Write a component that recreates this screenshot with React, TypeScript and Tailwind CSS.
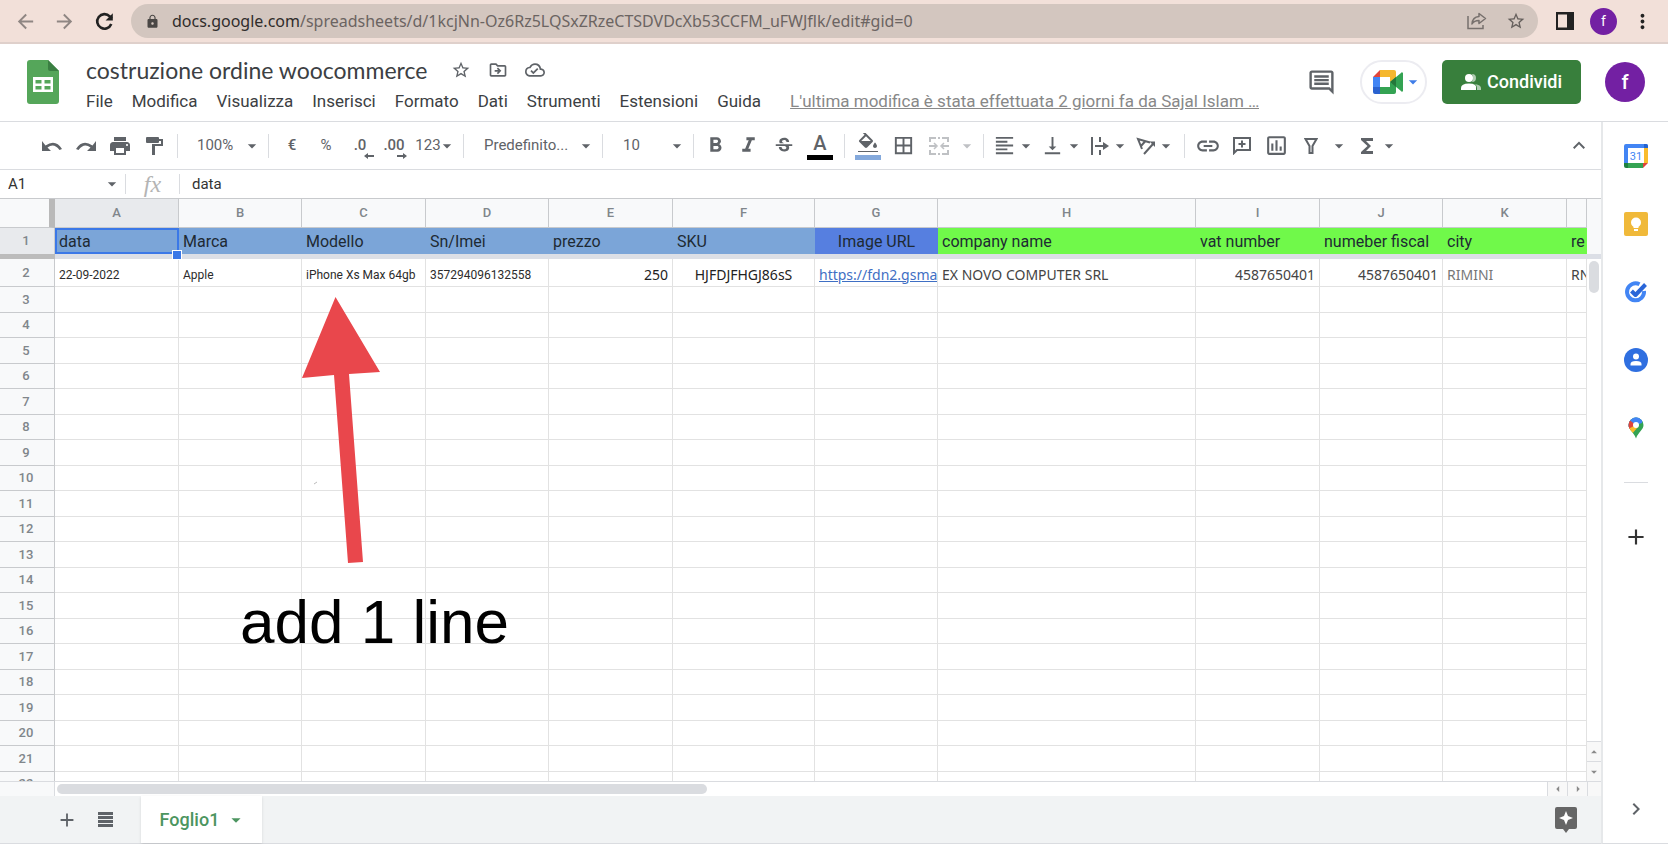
import { ReactNode } from "react";
import { clsx } from "clsx";
import {
    MdAdd,
    MdArrowBack,
    MdArrowDropDown,
    MdArrowDropUp,
    MdArrowForward,
    MdArrowLeft,
    MdArrowRight,
    MdBorderAll,
    MdChevronRight,
    MdFormatAlignLeft,
    MdFormatBold,
    MdFormatColorFill,
    MdFormatItalic,
    MdFunctions,
    MdInsertLink,
    MdKeyboardArrowUp,
    MdLock,
    MdMoreVert,
    MdOutlineCloudDone,
    MdOutlineDriveFileMove,
    MdOutlineInsertChart,
    MdOutlineInsertComment,
    MdPrint,
    MdStarBorder,
    MdStrikethroughS,
    MdVerticalAlignBottom,
} from "react-icons/md";

interface ToolProps {
    label: string;
    className?: string;
    children: ReactNode;
}

interface PickerProps {
    label: string;
    value: string;
    className: string;
}

interface Column {
    letter: string;
    width: string;
    title: string;
    value: ReactNode;
    head: string;
    cell: string;
}

const small = "font-[Roboto,sans-serif] text-xs leading-5 text-[#2b2b2b]";
const normal = "text-sm leading-5 text-[#444]";

const columns: Column[] = [
    { letter: "A", width: "w-[124px]", title: "data", value: "22-09-2022", head: "bg-[#7ba5d8]", cell: small },
    { letter: "B", width: "w-[123px]", title: "Marca", value: "Apple", head: "bg-[#7ba5d8]", cell: small },
    { letter: "C", width: "w-[124px]", title: "Modello", value: "iPhone Xs Max 64gb", head: "bg-[#7ba5d8]", cell: small },
    { letter: "D", width: "w-[123px]", title: "Sn/Imei", value: "357294096132558", head: "bg-[#7ba5d8]", cell: small },
    { letter: "E", width: "w-[124px]", title: "prezzo", value: "250", head: "bg-[#7ba5d8]", cell: "text-sm leading-5 text-[#222] text-right" },
    { letter: "F", width: "w-[142px]", title: "SKU", value: "HJFDJFHGJ86sS", head: "bg-[#7ba5d8]", cell: "text-sm leading-5 text-[#222] text-center" },
    {
        letter: "G",
        width: "w-[123px]",
        title: "Image URL",
        value: <a href="#image" className="text-[#3f6fc4] underline">https://fdn2.gsma</a>,
        head: "bg-[#567fe0] text-center",
        cell: "text-sm leading-5",
    },
    { letter: "H", width: "w-[258px]", title: "company name", value: "EX NOVO COMPUTER SRL", head: "bg-[#70f94a]", cell: normal },
    { letter: "I", width: "w-[124px]", title: "vat number", value: "4587650401", head: "bg-[#70f94a]", cell: "text-sm leading-5 text-[#444] text-right" },
    { letter: "J", width: "w-[123px]", title: "numeber fiscal", value: "4587650401", head: "bg-[#70f94a]", cell: "text-sm leading-5 text-[#444] text-right" },
    { letter: "K", width: "w-[124px]", title: "city", value: "RIMINI", head: "bg-[#70f94a]", cell: "text-sm leading-5 text-[#777]" },
    { letter: "", width: "", title: "re", value: "RN", head: "bg-[#70f94a]", cell: normal },
];

const emptyRows = Array.from({ length: 20 }, (_, i) => i + 3);

const menus = ["File", "Modifica", "Visualizza", "Inserisci", "Formato", "Dati", "Strumenti", "Estensioni", "Guida"];

const Tool = ({ label, className = "w-[34px]", children }: ToolProps) => (
    <button aria-label={label} className={clsx("flex items-center justify-center shrink-0 h-9", className)}>
        {children}
    </button>
);

const Divider = () => <span className="w-px mx-1.5 h-6 shrink-0 bg-[#dadce0]" />;

const Picker = ({ label, value, className }: PickerProps) => (
    <span className={clsx("grid items-center shrink-0", className)}>
        <select aria-label={label} className="w-full col-start-1 row-start-1 bg-transparent appearance-none outline-none">
            <option>{value}</option>
        </select>
        <MdArrowDropDown className="col-start-1 row-start-1 pointer-events-none justify-self-end" size={20} />
    </span>
);

const SheetsLogo = () => (
    <svg width="32" height="44" viewBox="0 0 32 44" className="shrink-0">
        <path d="M3 0H21L32 11V41a3 3 0 0 1-3 3H3a3 3 0 0 1-3-3V3a3 3 0 0 1 3-3Z" fill="#55a65a" />
        <path d="M21 0 32 11H23a2 2 0 0 1-2-2Z" fill="#3a7f42" />
        <path fillRule="evenodd" d="M6 17H26V32H6ZM8.500 20V23.500H14.500V20ZM17.500 20V23.500H23.500V20ZM8.500 26V29.500H14.500V26ZM17.500 26V29.500H23.500V26Z" fill="#fff" />
    </svg>
);

const MeetLogo = () => (
    <svg width="30" height="24" viewBox="0 0 30 24" className="shrink-0">
        <path d="M7 0V7H0Z" fill="#e0453a" />
        <path d="M0 7H7V17H0Z" fill="#4285f4" />
        <path d="M0 17H7V24H2a2 2 0 0 1-2-2Z" fill="#2a62cf" />
        <path d="M7 0H21a2 2 0 0 1 2 2V8L17 12V7H7Z" fill="#f5b72e" />
        <path d="M7 17H17V12L23 16V22a2 2 0 0 1-2 2H7Z" fill="#34a353" />
        <path d="M17 12 28 3a1 1 0 0 1 2 1V20a1 1 0 0 1-2 1Z" fill="#34a353" />
        <path d="M17 12 23 7V17Z" fill="#23783a" />
    </svg>
);

const CalendarLogo = () => (
    <svg width="24" height="24" viewBox="0 0 24 24">
        <path d="M2 0H22a2 2 0 0 1 2 2V4H4V19H0V2a2 2 0 0 1 2-2Z" fill="#4285f4" />
        <path d="M20 0H22a2 2 0 0 1 2 2V4H20Z" fill="#2463cf" />
        <path d="M20 4H24V19H20Z" fill="#f9bc2b" />
        <path d="M4 19H19V24H4Z" fill="#34a353" />
        <path d="M0 19H4V24H2a2 2 0 0 1-2-2Z" fill="#1f8040" />
        <path d="M19 19H24L19 24Z" fill="#e0453a" />
        <path d="M4 4H20V19H4Z" fill="#fff" />
        <text x="12" y="16" textAnchor="middle" fontSize="11" fontFamily="Roboto, sans-serif" fill="#4285f4">31</text>
    </svg>
);

const KeepLogo = () => (
    <svg width="24" height="24" viewBox="0 0 24 24">
        <rect width="24" height="24" rx="2" fill="#f0b93a" />
        <circle cx="12" cy="10.500" r="5" fill="#fff" />
        <path d="M9.500 14H14.500V16H9.500ZM10 17H14V19H10Z" fill="#fff" />
    </svg>
);

const TasksLogo = () => (
    <svg width="24" height="24" viewBox="0 0 24 24" fill="none">
        <path d="M15.500 4.300A8.500 8.500 0 1 0 20 11" stroke="#4285f4" strokeWidth="4" />
        <path d="M7.500 11 11.500 15 21.500 4.500" stroke="#2a66d8" strokeWidth="4" strokeLinejoin="round" />
    </svg>
);

const ContactsLogo = () => (
    <svg width="24" height="24" viewBox="0 0 24 24">
        <circle cx="12" cy="12" r="12" fill="#2f6fe0" />
        <circle cx="12" cy="8.500" r="3" fill="#fff" />
        <path d="M6.500 17.500V16q0-3 5.500-3t5.500 3V17.500Z" fill="#fff" />
    </svg>
);

const MapsLogo = () => (
    <svg width="24" height="24" viewBox="0 0 24 24">
        <clipPath id="pin">
            <path d="M12 1.500a7.500 7.500 0 0 1 7.500 7.500c0 5-5 6.500-7.500 13.500C9.500 15.500 4.500 14 4.500 9A7.500 7.500 0 0 1 12 1.500Z" />
        </clipPath>
        <g clipPath="url(#pin)">
            <path d="M0 0H24V24H0Z" fill="#34a353" />
            <path d="M0 18 18 0H0Z" fill="#4285f4" />
            <path d="M8 0H20L18 7 12 9Z" fill="#4285f4" />
            <path d="M4 3 12 9 4 18Z" fill="#e0453a" />
            <path d="M4 13 12 9 14 11 7 19Z" fill="#f9bc2b" />
        </g>
        <circle cx="12" cy="9" r="3" fill="#fff" />
    </svg>
);

const BrowserBar = () => (
    <div className="flex items-center h-11 pl-3 pr-3.5 bg-[#f2e0d9] border-b-2 border-[#dfd0cb] shrink-0">
        <button aria-label="Indietro" className="px-0.5 text-[#8f8683]"><MdArrowBack size={23} /></button>
        <button aria-label="Avanti" className="px-0.5 ml-3 text-[#8f8683]"><MdArrowForward size={23} /></button>
        <button aria-label="Ricarica" className="px-0.5 ml-3 text-[#222]">
            <svg width="25" height="25" viewBox="0 0 24 24" fill="none" stroke="currentColor" strokeWidth="2.500">
                <path d="M18.500 14.500A7 7 0 1 1 17 7L19 9" />
                <path d="M20 4V11H13Z" fill="currentColor" stroke="none" />
            </svg>
        </button>
        <div className="flex items-center flex-1 h-[34px] ml-3 pl-3.5 pr-3 bg-[#d3c6bf] rounded-full">
            <MdLock size={15} className="text-[#4a4745] shrink-0" />
            <p className="flex-1 ml-3 font-[Noto_Sans,sans-serif] text-base text-[#6b6462] whitespace-nowrap">
                <span className="text-[#2f2c2b]">docs.google.com</span>
                /spreadsheets/d/1kcjNn-Oz6Rz5LQSxZRzeCTSDVDcXb53CCFM_uFWJflk/edit#gid=0
            </p>
            <button aria-label="Condividi pagina" className="text-[#77706d]">
                <svg width="20" height="18" viewBox="0 0 20 18" fill="none" stroke="currentColor" strokeWidth="1.500">
                    <path d="M1 4V16.500H16V13" />
                    <path d="M12 1.500 18.500 6.500 12 11.500V8.500Q7 8.500 5 12 5.500 5 12 4.500Z" strokeLinejoin="round" />
                </svg>
            </button>
            <button aria-label="Preferiti" className="ml-[19px] text-[#66605d]"><MdStarBorder size={20} /></button>
        </div>
        <button aria-label="Pannello laterale" className="ml-[18px]">
            <svg width="18" height="18" viewBox="0 0 18 18">
                <path fillRule="evenodd" d="M0 0H18V18H0ZM2 2.500V15.500H11V2.500Z" fill="#222" />
            </svg>
        </button>
        <button className="flex items-center justify-center ml-4 text-sm text-white rounded-full size-[27px] bg-[#7320a3]">f</button>
        <button aria-label="Menu" className="ml-3.5 text-[#222]"><MdMoreVert size={23} /></button>
    </div>
);

const Header = () => (
    <header className="flex items-start h-[78px] pl-[27px] pr-[23px] pt-2.5 border-b border-[#dadce0] shrink-0">
        <div className="pt-1.5"><SheetsLogo /></div>
        <div className="flex-1 min-w-0 ml-[27px]">
            <div className="flex items-center h-8 text-[#5f6368]">
                <h1 className="font-[Lato,sans-serif] text-[23px] leading-8 text-[#3c4043]">costruzione ordine woocommerce</h1>
                <button aria-label="Speciali" className="ml-6"><MdStarBorder size={20} /></button>
                <button aria-label="Sposta" className="ml-[17px]"><MdOutlineDriveFileMove size={20} /></button>
                <button aria-label="Stato documento" className="ml-[17px]"><MdOutlineCloudDone size={20} /></button>
            </div>
            <nav className="flex items-center h-8 text-[17px] text-[#3c4043] whitespace-nowrap">
                {menus.map((menu) => <button key={menu} className="mr-[19px]">{menu}</button>)}
                <a href="#cronologia" className="ml-2.5 truncate text-[#888] underline">
                    L'ultima modifica è stata effettuata 2 giorni fa da Sajal Islam …
                </a>
            </nav>
        </div>
        <div className="flex items-center pt-1.5 shrink-0">
            <button aria-label="Commenti" className="text-[#5f6368]"><MdOutlineInsertComment size={29} /></button>
            <button aria-label="Meet" className="flex items-center ml-6 pl-[11px] border-2 border-[#ececf1] rounded-full w-[67px] h-11">
                <MeetLogo />
                <MdArrowDropDown size={20} className="text-[#3f7de8] shrink-0" />
            </button>
            <button className="flex items-center justify-center gap-1.5 ml-[15px] text-lg font-medium text-white bg-[#387f3c] rounded-[5px] w-[139px] h-11">
                <svg width="20" height="16" viewBox="0 0 20 16" fill="#fff">
                    <path d="M11 0a4 4 0 0 1 0 8q2-4 0-8ZM14 10q6 1 6 4v2H16V14q0-2.500-2-4Z" opacity="0.600" />
                    <circle cx="8" cy="4" r="4" />
                    <path d="M0 16V14q0-4.500 8-4.500t7 4.500V16Z" />
                </svg>
                Condividi
            </button>
            <button className="flex items-center justify-center ml-6 text-xl font-medium text-white bg-[#7320a3] rounded-full size-10">f</button>
        </div>
    </header>
);

const Toolbar = () => (
    <div className="flex items-center h-12 pl-[35px] pr-2.5 border-b border-[#dadce0] text-[15px] text-[#5f6368] shrink-0">
        <Tool label="Annulla">
            <svg width="20" height="10" viewBox="0 0 20 10">
                <path d="M0 0V10H9L5.500 6.500Q12 1.500 17.500 9L20 8Q13.500-2.500 3.500 4.500Z" fill="currentColor" />
            </svg>
        </Tool>
        <Tool label="Ripeti">
            <svg width="20" height="10" viewBox="0 0 20 10">
                <path d="M20 0V10H11L14.500 6.500Q8 1.500 2.500 9L0 8Q6.500-2.500 16.500 4.500Z" fill="currentColor" />
            </svg>
        </Tool>
        <Tool label="Stampa"><MdPrint size={24} /></Tool>
        <Tool label="Copia formato">
            <svg width="17" height="18" viewBox="0 0 17 18">
                <path d="M1 0H12a1 1 0 0 1 1 1V2H17V9H9V18H6V7H15V4H13V5a1 1 0 0 1-1 1H1A1 1 0 0 1 0 5V1A1 1 0 0 1 1 0Z" fill="currentColor" />
            </svg>
        </Tool>
        <Divider />
        <Picker label="Zoom" value="100%" className="w-[78px] pl-[13px]" />
        <Divider />
        <Tool label="Valuta"><span className="font-medium">€</span></Tool>
        <Tool label="Percentuale">%</Tool>
        <Tool label="Riduci decimali">
            <span className="relative font-medium">
                .0
                <svg width="10" height="6" viewBox="0 0 10 6" className="absolute -right-2 -bottom-0.5"><path d="M0 3 4 0V2H10V4H4V6Z" fill="currentColor" /></svg>
            </span>
        </Tool>
        <Tool label="Aumenta decimali">
            <span className="relative font-medium">
                .00
                <svg width="10" height="6" viewBox="0 0 10 6" className="absolute -right-0.5 -bottom-0.5"><path d="M10 3 6 0V2H0V4H6V6Z" fill="currentColor" /></svg>
            </span>
        </Tool>
        <Tool label="Altri formati" className="w-[46px]">123<MdArrowDropDown size={20} className="-mx-1" /></Tool>
        <Divider />
        <Picker label="Carattere" value="Predefinito..." className="w-[126px] pl-3.5" />
        <Divider />
        <Picker label="Dimensione carattere" value="10" className="w-[78px] pl-3.5" />
        <Divider />
        <Tool label="Grassetto" className="w-[30px]"><MdFormatBold size={25} /></Tool>
        <Tool label="Corsivo" className="w-9"><MdFormatItalic size={25} /></Tool>
        <Tool label="Barrato" className="w-9"><MdStrikethroughS size={22} /></Tool>
        <Tool label="Colore testo" className="w-9">
            <span className="flex flex-col items-center w-[26px] border-b-[5px] border-black text-xl leading-6 font-medium">A</span>
        </Tool>
        <Divider />
        <Tool label="Colore riempimento" className="w-[34px]">
            <span className="flex flex-col items-center w-[26px] h-[29px] pt-0.5 overflow-hidden border-b-[5px] border-[#84a9dc]">
                <span className="h-[19px] overflow-hidden"><MdFormatColorFill size={24} className="-mt-0.5" /></span>
            </span>
        </Tool>
        <Tool label="Bordi" className="w-9"><MdBorderAll size={23} /></Tool>
        <Tool label="Unisci celle" className="w-9 text-[#bfc1c4]">
            <svg width="20" height="18" viewBox="0 0 20 18" fill="none" stroke="currentColor" strokeWidth="2">
                <path d="M1 5V1H7M9 1H11M13 1H19V5M1 13V17H7M9 17H11M13 17H19V13M0 9H7M20 9H13" />
                <path d="M5 6 8 9 5 12M15 6 12 9 15 12" strokeWidth="1.500" />
            </svg>
        </Tool>
        <Tool label="Tipo di unione" className="w-5 text-[#bfc1c4]"><MdArrowDropDown size={20} className="shrink-0" /></Tool>
        <Divider />
        <Tool label="Allinea orizzontale" className="w-12"><MdFormatAlignLeft size={23} /><MdArrowDropDown size={20} /></Tool>
        <Tool label="Allinea verticale" className="w-12"><MdVerticalAlignBottom size={23} /><MdArrowDropDown size={20} /></Tool>
        <Tool label="Testo a capo" className="w-12">
            <svg width="20" height="20" viewBox="0 0 20 20" fill="none" stroke="currentColor" strokeWidth="2">
                <path d="M2 1V19M10 1V6M10 14V19M5 10H16" />
                <path d="M13 6 19 10 13 14Z" fill="currentColor" stroke="none" />
            </svg>
            <MdArrowDropDown size={20} />
        </Tool>
        <Tool label="Rotazione testo" className="w-11">
            <svg width="20" height="20" viewBox="0 0 20 20" fill="none" stroke="currentColor" strokeWidth="2">
                <path d="M6 13 2 3 14 6.500M5 10 9 5.500M8 18 17 8" />
                <path d="M13.500 5.500H19V11Z" fill="currentColor" stroke="none" />
            </svg>
            <MdArrowDropDown size={20} />
        </Tool>
        <Divider />
        <Tool label="Inserisci link"><MdInsertLink size={26} /></Tool>
        <Tool label="Inserisci commento">
            <svg width="18" height="18" viewBox="0 0 18 18" fill="none" stroke="currentColor" strokeWidth="2">
                <path d="M1 16V1H17V13H4Z" />
                <path d="M9 3.500V10.500M5.500 7H12.500" />
            </svg>
        </Tool>
        <Tool label="Inserisci grafico"><MdOutlineInsertChart size={25} /></Tool>
        <Tool label="Crea filtro" className="w-9">
            <svg width="14" height="16" viewBox="0 0 14 16" fill="none" stroke="currentColor" strokeWidth="2">
                <path d="M1.500 1H12.500L8.500 8V15H5.500V8Z" />
            </svg>
        </Tool>
        <Tool label="Viste filtrate" className="w-5"><MdArrowDropDown size={20} /></Tool>
        <Tool label="Funzioni" className="w-14"><MdFunctions size={24} /><MdArrowDropDown size={20} /></Tool>
        <Tool label="Nascondi i menu" className="ml-auto w-6"><MdKeyboardArrowUp size={25} /></Tool>
    </div>
);

const FormulaBar = () => (
    <div className="flex items-center h-[29px] border-b border-[#c8cacd] text-[15px] text-[#333] shrink-0">
        <input aria-label="Casella nome" defaultValue="A1" className="w-[93px] pl-2 outline-none" />
        <button aria-label="Intervalli" className="w-8 pl-[9px] text-[#5f6368]"><MdArrowDropDown size={20} /></button>
        <span className="w-px h-5 bg-[#dadce0]" />
        <label htmlFor="formula" className="w-[53px] text-center font-[Liberation_Serif,serif] italic text-2xl leading-6 text-[#b4b4b4]">fx</label>
        <span className="w-px h-5 bg-[#dadce0]" />
        <input id="formula" defaultValue="data" className="flex-1 pl-3 outline-none" />
    </div>
);

const Grid = () => (
    <table className="w-full border-separate table-fixed border-spacing-0">
        <colgroup>
            <col className="w-[55px]" />
            {columns.map((column) => <col key={column.letter} className={column.width} />)}
        </colgroup>
        <thead>
            <tr className="h-[29px] text-[13px] leading-5 text-[#80868b]">
                <th className="bg-[#f8f9fa] border-r-[6px] border-b border-[#b9b9b9] border-b-[#c8cacd]" />
                {columns.map((column) => (
                    <th
                        key={column.letter}
                        className={clsx(
                            "border-r border-b border-[#c8cacd] font-medium",
                            column.letter === "A" ? "bg-[#e8eaed]" : "bg-[#f8f9fa]"
                        )}
                    >
                        {column.letter}
                    </th>
                ))}
            </tr>
        </thead>
        <tbody>
            <tr className="h-[26px] font-[Roboto,sans-serif] text-base leading-5 text-[#1e2a33]">
                <th className="py-0 pr-0.5 text-[13px] leading-5 font-medium text-[#80868b] bg-[#e8eaed] border-r border-[#c8cacd]">1</th>
                {columns.map((column) => (
                    <td
                        key={column.letter}
                        className={clsx(
                            "px-1 pt-0.5 pb-0 overflow-hidden whitespace-nowrap",
                            column.head,
                            column.letter === "A" && "relative outline-2 -outline-offset-2 outline-[#3b78e7]"
                        )}
                    >
                        {column.title}
                    </td>
                ))}
            </tr>
            <tr className="h-[5px]">
                <td className="p-0 bg-[#bcbcbc]" />
                <td colSpan={columns.length} className="p-0 bg-[#dcdfe6]" />
            </tr>
            <tr className="h-7 font-[Noto_Sans,sans-serif]">
                <th className="py-0 pr-0.5 font-[Roboto,sans-serif] text-[13px] leading-5 font-medium text-[#80868b] bg-[#f8f9fa] border-r border-b border-[#c8cacd]">2</th>
                {columns.map((column) => (
                    <td
                        key={column.letter}
                        className={clsx("px-1 pt-1 pb-0 overflow-hidden whitespace-nowrap border-r border-b border-[#e2e2e2]", column.cell)}
                    >
                        {column.value}
                    </td>
                ))}
            </tr>
            {emptyRows.map((row) => (
                <tr key={row} className={row % 2 ? "h-[26px]" : "h-[25px]"}>
                    <th className="py-0 pr-0.5 text-[13px] leading-5 font-medium text-[#80868b] bg-[#f8f9fa] border-r border-b border-[#c8cacd]">{row}</th>
                    {columns.map((column) => <td key={column.letter} className="p-0 border-r border-b border-[#e2e2e2]" />)}
                </tr>
            ))}
        </tbody>
    </table>
);

// hand-drawn note on top of the cells
const Note = () => (
    <>
        <svg width="80" height="267" viewBox="0 0 80 267" className="absolute top-[98px] left-[301px]">
            <path d="M34.500 0 79 75 48 77 62 265 47 266 33 78 1 81Z" fill="#e9474c" />
            <path d="M13 187 16 185" stroke="#bbb" />
        </svg>
        <p className="absolute top-[388px] left-[240px] font-[Liberation_Sans,sans-serif] text-[62px] leading-[70px] text-black whitespace-nowrap">
            add 1 line
        </p>
        <span className="absolute top-[51px] left-[172px] size-2 bg-[#3b78e7] border border-white box-content" />
    </>
);

const App = () => {
    return (
        <div className="flex flex-col h-screen overflow-hidden bg-white font-[Roboto,sans-serif]">
            <BrowserBar />
            <Header />
            <div className="flex flex-1 min-h-0">
                <main className="flex flex-col flex-1 min-w-0">
                    <Toolbar />
                    <FormulaBar />
                    <div className="flex flex-1 min-h-0">
                        <div className="relative flex-1 min-w-0 overflow-hidden">
                            <Grid />
                            <Note />
                        </div>
                        <div className="flex flex-col w-3.5 text-[#8a8a8a]">
                            <span className="h-[55px] bg-[#f8f9fa]" />
                            <span className="h-[5px] bg-[#dcdfe6]" />
                            <span className="w-2.5 mx-auto mt-0.5 rounded-full h-8 bg-[#dadce0]" />
                            <button aria-label="Su" className="flex items-center justify-center mt-auto h-5 bg-[#f8f8f8] border-t border-[#dadce0]"><MdArrowDropUp size={14} /></button>
                            <button aria-label="Giù" className="flex items-center justify-center h-5 bg-[#f8f8f8] border-t border-[#dadce0]"><MdArrowDropDown size={14} /></button>
                        </div>
                    </div>
                    <div className="flex h-[15px] border-t border-[#dadce0] text-[#8a8a8a] shrink-0">
                        <span className="w-[55px] bg-[#f8f9fa] border-r border-[#dadce0]" />
                        <span className="w-[650px] ml-0.5 my-0.5 rounded-full bg-[#dadce0]" />
                        <button aria-label="Sinistra" className="flex items-center justify-center w-5 ml-auto bg-[#f8f8f8] border-l border-[#dadce0]"><MdArrowLeft size={14} /></button>
                        <button aria-label="Destra" className="flex items-center justify-center w-5 bg-[#f8f8f8] border-l border-[#dadce0]"><MdArrowRight size={14} /></button>
                        <span className="w-3.5 bg-[#f8f8f8] border-l border-[#dadce0]" />
                    </div>
                    <div className="flex items-center h-12 pl-14 pr-6 bg-[#f1f3f4] border-b border-[#dadce0] text-[#5f6368] shrink-0">
                        <button aria-label="Aggiungi foglio"><MdAdd size={22} /></button>
                        <button aria-label="Tutti i fogli" className="ml-5">
                            <svg width="15" height="15" viewBox="0 0 15 15"><path d="M0 0H15V3H0ZM0 4H15V7H0ZM0 8H15V11H0ZM0 12H15V15H0Z" fill="currentColor" /></svg>
                        </button>
                        <button className="flex items-center self-stretch justify-center gap-1.5 ml-7 pl-1 w-[121px] bg-white shadow-sm text-lg font-medium text-[#4c9560]">
                            Foglio1
                            <MdArrowDropDown size={22} />
                        </button>
                        <button aria-label="Esplora" className="ml-auto">
                            <svg width="22" height="26" viewBox="0 0 22 26">
                                <path d="M2 0H20a2 2 0 0 1 2 2V20a2 2 0 0 1-2 2H14L11 26 8 22H2a2 2 0 0 1-2-2V2a2 2 0 0 1 2-2Z" fill="#666" />
                                <path d="M11 4 13 9 18 11 13 13 11 18 9 13 4 11 9 9Z" fill="#fff" />
                            </svg>
                        </button>
                    </div>
                </main>
                <aside className="flex flex-col w-[67px] pl-px border-l-2 border-[#e6e8ea] border-b border-b-[#dadce0]">
                    <button aria-label="Calendar" className="flex items-center justify-center h-[68px]"><CalendarLogo /></button>
                    <button aria-label="Keep" className="flex items-center justify-center h-[68px]"><KeepLogo /></button>
                    <button aria-label="Tasks" className="flex items-center justify-center h-[68px]"><TasksLogo /></button>
                    <button aria-label="Contatti" className="flex items-center justify-center h-[68px]"><ContactsLogo /></button>
                    <button aria-label="Maps" className="flex items-center justify-center h-[68px]"><MapsLogo /></button>
                    <hr className="w-6 mx-auto my-5 border-[#dadce0]" />
                    <button aria-label="Componenti aggiuntivi" className="flex items-center justify-center h-[68px] text-[#333]"><MdAdd size={26} /></button>
                    <button aria-label="Nascondi pannello" className="flex items-center justify-center h-[68px] mt-auto text-[#5f6368]"><MdChevronRight size={24} /></button>
                </aside>
            </div>
        </div>
    );
};

export default App;
